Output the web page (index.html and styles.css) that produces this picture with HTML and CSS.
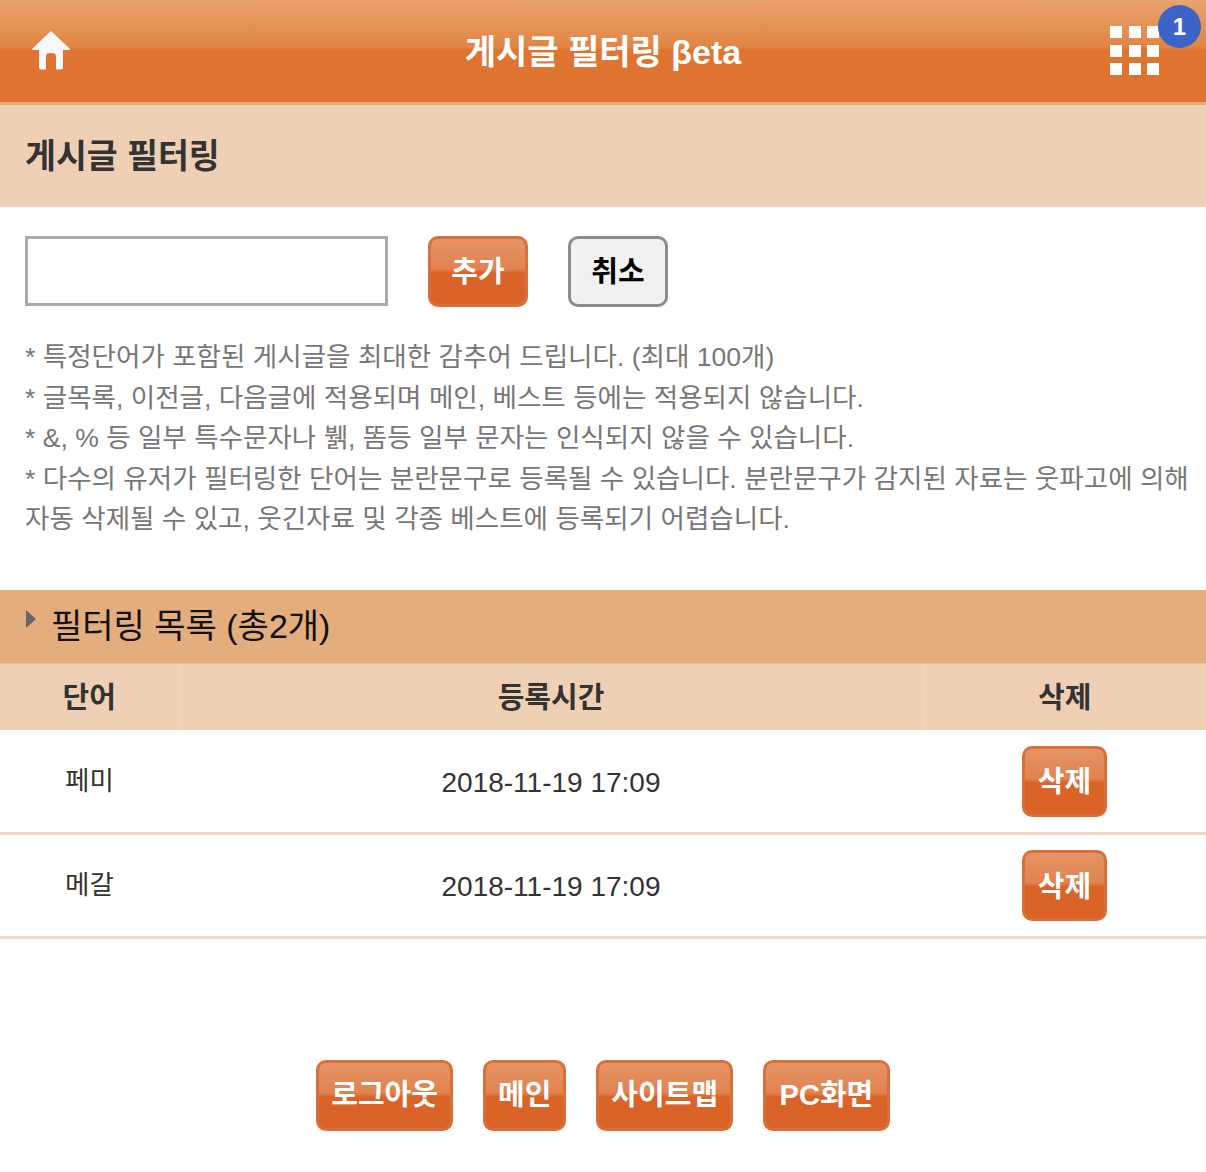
FILE: index.html
```html
<!DOCTYPE html>
<html lang="ko">

<head>
  <meta name="viewport" content="width=device-width, initial-scale=1">
  <link rel="stylesheet" href="styles.css">
</head>

<body>

  <header class="topbar">
    <a href="#" class="home-link">
      <svg class="home-icon" viewBox="0 0 38 39" aria-hidden="true">
        <path d="M19 0 L37.500 17.500 Q38.500 19 37 19 L31 19 L31 36.500 Q31 38.500 29 38.500 L24 38.500 L24 25 Q24 22 19 22 Q14 22 14 25 L14 38.500 L9 38.500 Q7 38.500 7 36.500 L7 19 L1 19 Q-0.500 19 0.500 17.500 Z" />
      </svg>
    </a>
    <h1 class="topbar-title">게시글 필터링 βeta</h1>
    <a href="#" class="menu-link">
      <span class="menu-grid">
        <i></i><i></i><i></i>
        <i></i><i></i><i></i>
        <i></i><i></i><i></i>
      </span>
      <span class="badge">1</span>
    </a>
  </header>

  <h2 class="page-title">게시글 필터링</h2>

  <form class="filter-form">
    <input type="text" class="word-input">
    <button type="button" class="btn btn-add">추가</button>
    <button type="button" class="btn-cancel">취소</button>
  </form>

  <div class="notice">
    <p>* 특정단어가 포함된 게시글을 최대한 감추어 드립니다. (최대 100개)</p>
    <p>* 글목록, 이전글, 다음글에 적용되며 메인, 베스트 등에는 적용되지 않습니다.</p>
    <p>* &amp;, % 등 일부 특수문자나 뷁, 똠등 일부 문자는 인식되지 않을 수 있습니다.</p>
    <p>* 다수의 유저가 필터링한 단어는 분란문구로 등록될 수 있습니다. 분란문구가 감지된 자료는 웃파고에 의해 자동 삭제될 수 있고, 웃긴자료 및 각종 베스트에 등록되기 어렵습니다.</p>
  </div>

  <h3 class="list-title"><span class="arrow"></span>필터링 목록 (총2개)</h3>

  <table class="word-table">
    <thead>
      <tr>
        <th class="col-word">단어</th>
        <th class="col-time">등록시간</th>
        <th class="col-del">삭제</th>
      </tr>
    </thead>
    <tbody>
      <tr>
        <td class="cell-word">페미</td>
        <td class="cell-time">2018-11-19 17:09</td>
        <td class="cell-del"><button type="button" class="btn btn-del">삭제</button></td>
      </tr>
      <tr>
        <td class="cell-word">메갈</td>
        <td class="cell-time">2018-11-19 17:09</td>
        <td class="cell-del"><button type="button" class="btn btn-del">삭제</button></td>
      </tr>
    </tbody>
  </table>

  <nav class="footer-nav">
    <a href="#" class="btn btn-foot">로그아웃</a>
    <a href="#" class="btn btn-foot">메인</a>
    <a href="#" class="btn btn-foot">사이트맵</a>
    <a href="#" class="btn btn-foot btn-pc">PC화면</a>
  </nav>

</body>

</html>
```

FILE: styles.css
```css
* {
  box-sizing: border-box;
}

body {
  margin: 0;
  height: 1172px;
  overflow: hidden;
  background-color: white;
  font-family: "Liberation Sans", "Noto Sans CJK KR", sans-serif;
  color: #333;
}

/* Top orange bar */
.topbar {
  position: relative;
  display: flex;
  align-items: center;
  justify-content: center;
  height: 105px;
  padding-bottom: 4px;
  border-bottom: 3px solid #eaa878;
  background: linear-gradient(#e9a36c 0%, #e18544 46%, #df7430 49%, #df7430 100%);
}

.topbar-title {
  margin: 0;
  font-size: 34px;
  font-weight: bold;
  color: #fff;
}

.home-link {
  position: absolute;
  left: 32px;
  top: 31px;
}

.home-icon {
  display: block;
  width: 38px;
  height: 39px;
  fill: #f8f8f8;
}

.menu-link {
  position: absolute;
  left: 1110px;
  top: 26px;
}

.menu-grid {
  display: grid;
  grid-template-columns: repeat(3, 12px);
  grid-auto-rows: 12px;
  gap: 6.500px;
}

.menu-grid i {
  background-color: #fff;
}

.badge {
  position: absolute;
  left: 48px;
  top: -21px;
  width: 43px;
  height: 43px;
  border-radius: 50%;
  background-color: #3c64c8;
  color: #fff;
  font-size: 24px;
  font-weight: bold;
  line-height: 43px;
  text-align: center;
}

/* Page heading */
.page-title {
  margin: 0;
  height: 102px;
  padding-left: 25px;
  background-color: #efd0b5;
  font-size: 33.600px;
  line-height: 104px;
  font-weight: bold;
}

/* Add form */
.filter-form {
  display: flex;
  align-items: flex-start;
  padding: 29px 0 0 25px;
}

.word-input {
  width: 363px;
  height: 70px;
  margin-right: 40px;
  border: 3px solid #aaa;
  background-color: #fff;
}

.btn {
  display: block;
  border: 3px solid #d9703a;
  border-radius: 10px;
  background: linear-gradient(#e59464 0%, #e08350 46%, #da6327 52%, #da6227 100%);
  color: #fff;
  font-family: inherit;
  font-size: 29px;
  font-weight: bold;
  text-align: center;
  text-decoration: none;
}

.btn-add {
  width: 100px;
  height: 71px;
  margin-right: 40px;
  padding: 0 0 6px;
}

.btn-cancel {
  width: 100px;
  height: 71px;
  padding: 0 0 6px;
  border: 3px solid #8c8c8c;
  border-radius: 10px;
  background-color: #f1f1f1;
  color: #000;
  font-family: inherit;
  font-size: 29px;
  font-weight: bold;
}

/* Help text */
.notice {
  padding: 30px 14px 0 25px;
  font-size: 26.550px;
  line-height: 40.600px;
  color: #777;
  word-break: keep-all;
}

.notice p {
  margin: 0;
}

/* Filter list */
.list-title {
  position: relative;
  margin: 50px 0 0;
  height: 74px;
  padding-left: 51px;
  background-color: #e4ad7e;
  border-bottom: 1px solid #eebf98;
  color: #111;
  font-size: 34px;
  line-height: 73px;
  font-weight: normal;
}

.arrow {
  position: absolute;
  left: 26px;
  top: 20px;
  border-left: 10px solid #666;
  border-top: 9px solid transparent;
  border-bottom: 9px solid transparent;
}

.word-table {
  width: 100%;
  border-collapse: collapse;
  table-layout: fixed;
}

.word-table th {
  height: 66px;
  padding: 0 0 4px;
  background-color: #efd0b5;
  border-left: 1px solid #f3dac5;
  font-size: 29px;
  font-weight: bold;
}

.word-table th:first-child {
  border-left: none;
}

.col-word {
  width: 179px;
}

.col-del {
  width: 283px;
}

.word-table td {
  height: 104px;
  padding: 0;
  border-bottom: 3px solid #efd6c3;
  text-align: center;
}

.word-table .cell-word {
  padding-bottom: 6px;
  font-size: 26.500px;
}

.word-table .cell-time {
  padding-top: 3px;
  font-size: 28px;
}

.btn-del {
  width: 85px;
  height: 71px;
  margin: 0 auto;
  padding: 0 0 4px;
}

/* Bottom buttons */
.footer-nav {
  display: flex;
  justify-content: center;
  gap: 30px;
  margin-top: 121px;
}

.btn-foot {
  height: 71px;
  padding: 0 12px;
  line-height: 64px;
}

.btn-pc {
  padding: 0 13.500px;
}
```
